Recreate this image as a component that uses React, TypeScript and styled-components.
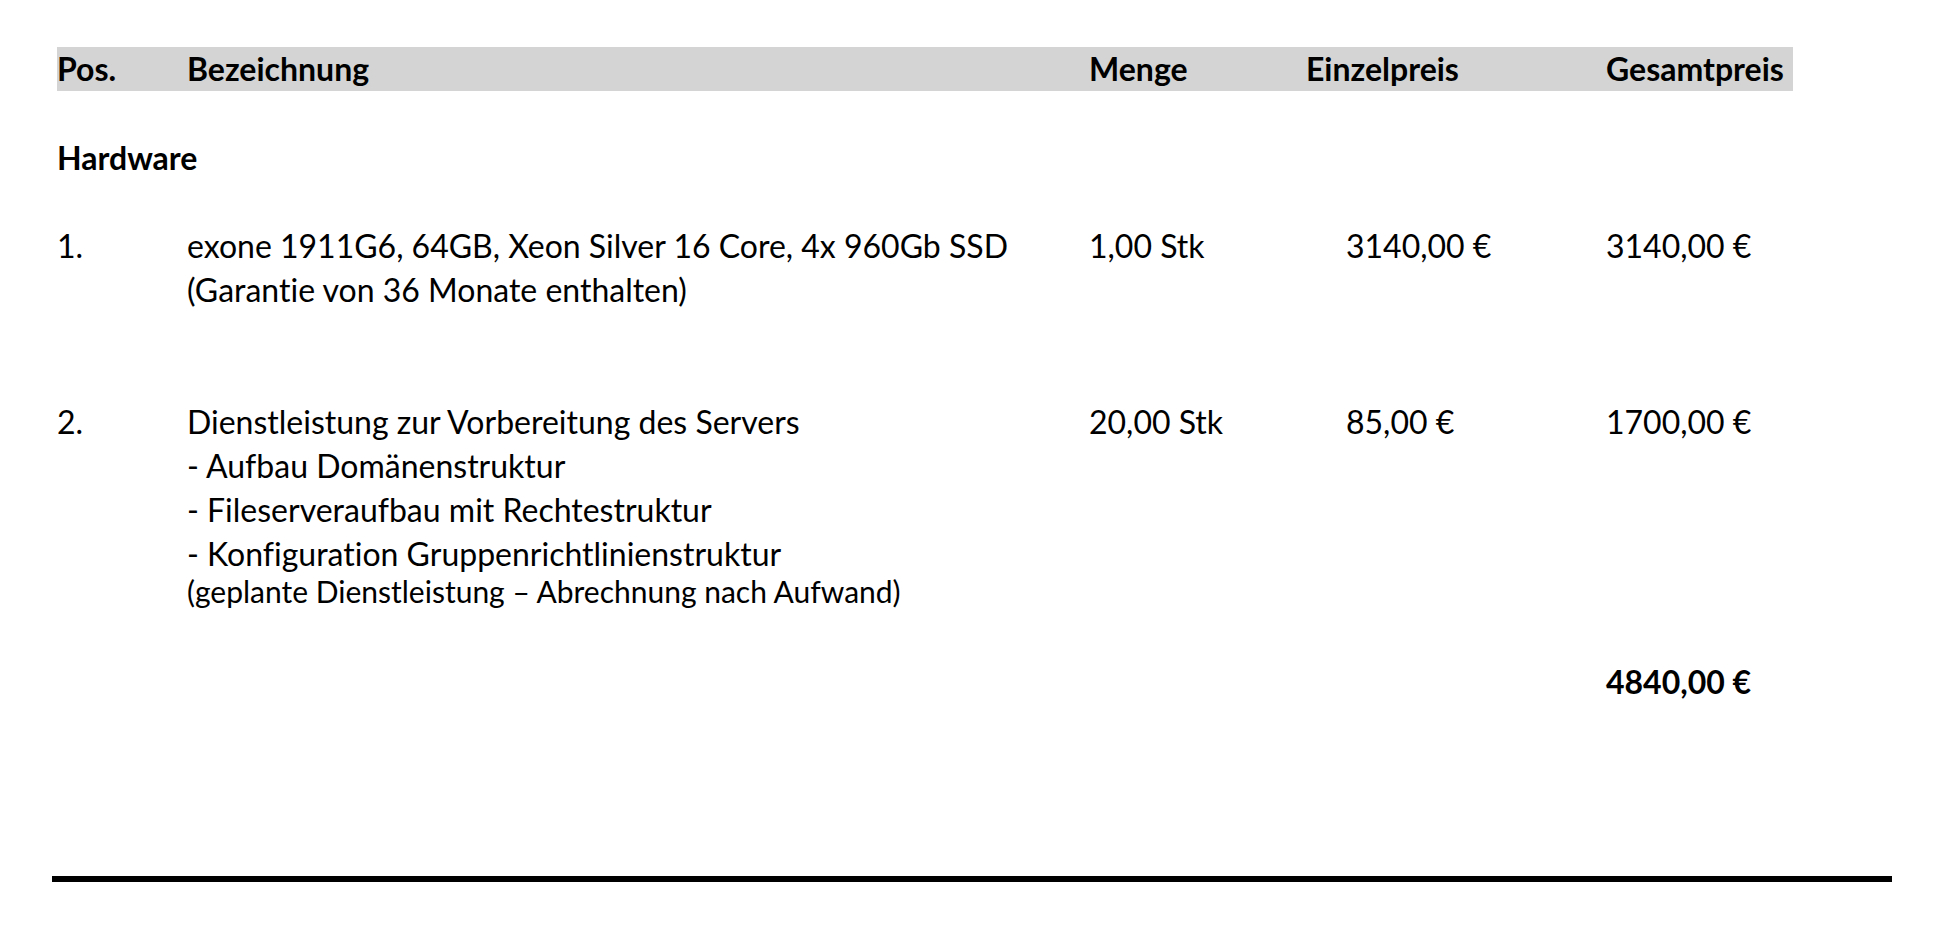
import styled, { createGlobalStyle } from "styled-components";

const GlobalStyle = createGlobalStyle`
  body {
    margin: 0;
    background: #ffffff;
    color: #000000;
    font-family: "Lato", "Liberation Sans", sans-serif;
    font-variant-ligatures: none;
  }
`;

const Sheet = styled.div`
  width: 1938px;
  min-height: 938px;
  padding: 47px 46px 0 52px;
  box-sizing: border-box;
  display: flex;
  flex-direction: column;
`;

const Table = styled.div`
  margin-left: 5px;
  width: 1736px;
  display: flex;
  flex-direction: column;
`;

const Row = styled.div<{ $gap?: number }>`
  display: grid;
  grid-template-columns: 130px 902px 217px 300px 187px;
  margin-top: ${({ $gap }) => $gap ?? 0}px;
  font-size: 32px;
  line-height: 44px;
`;

const HeaderRow = styled(Row)`
  background: #d4d4d4;
  font-weight: 700;
  height: 44px;
`;

const Cell = styled.div<{ $indent?: number; $bold?: boolean }>`
  padding-left: ${({ $indent }) => $indent ?? 0}px;
  font-weight: ${({ $bold }) => ($bold ? 700 : "inherit")};
  white-space: nowrap;
`;

const Line = styled.div``;

const Note = styled.div`
  font-size: 30px;
  line-height: 30px;
`;

const SectionTitle = styled.div`
  margin-top: 45px;
  font-size: 32px;
  line-height: 44px;
  font-weight: 700;
`;

const Rule = styled.div`
  margin-top: 172px;
  height: 6px;
  width: 1840px;
  background: #000000;
`;

interface Item {
  pos: string;
  lines: string[];
  note?: string;
  qty: string;
  unit: string;
  total: string;
  gap: number;
}

const items: Item[] = [
  {
    pos: "1.",
    lines: [
      "exone 1911G6, 64GB, Xeon Silver 16 Core, 4x 960Gb SSD",
      "(Garantie von 36 Monate enthalten)",
    ],
    qty: "1,00 Stk",
    unit: "3140,00 €",
    total: "3140,00 €",
    gap: 44,
  },
  {
    pos: "2.",
    lines: [
      "Dienstleistung zur Vorbereitung des Servers",
      "- Aufbau Domänenstruktur",
      "- Fileserveraufbau mit Rechtestruktur",
      "- Konfiguration Gruppenrichtlinienstruktur",
    ],
    note: "(geplante Dienstleistung – Abrechnung nach Aufwand)",
    qty: "20,00 Stk",
    unit: "85,00 €",
    total: "1700,00 €",
    gap: 88,
  },
];

export default function App() {
  return (
    <>
      <GlobalStyle />
      <Sheet>
        <Table>
          <HeaderRow>
            <Cell>Pos.</Cell>
            <Cell>Bezeichnung</Cell>
            <Cell>Menge</Cell>
            <Cell>Einzelpreis</Cell>
            <Cell>Gesamtpreis</Cell>
          </HeaderRow>
          <SectionTitle>Hardware</SectionTitle>
          {items.map((item) => (
            <Row key={item.pos} $gap={item.gap}>
              <Cell>{item.pos}</Cell>
              <Cell>
                {item.lines.map((l) => (
                  <Line key={l}>{l}</Line>
                ))}
                {item.note && <Note>{item.note}</Note>}
              </Cell>
              <Cell>{item.qty}</Cell>
              <Cell $indent={40}>{item.unit}</Cell>
              <Cell>{item.total}</Cell>
            </Row>
          ))}
          <Row $gap={54}>
            <Cell />
            <Cell />
            <Cell />
            <Cell />
            <Cell $bold>4840,00 €</Cell>
          </Row>
        </Table>
        <Rule />
      </Sheet>
    </>
  );
}
